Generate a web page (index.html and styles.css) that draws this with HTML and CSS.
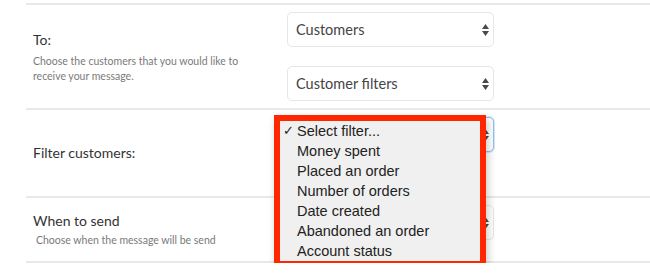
FILE: index.html
```html
<!DOCTYPE html>
<html lang="en">
<head>
    <meta charset="UTF-8">
    <meta name="viewport" content="width=device-width, initial-scale=1.0">
    <title>Message settings</title>
    <link rel="stylesheet" href="styles.css">
</head>
<body>
    <main class="settings">
        <section class="row row-to">
            <div class="label">
                <h3>To:</h3>
                <p>Choose the customers that you would like to<br>receive your message.</p>
            </div>
            <div class="controls">
                <div class="select">
                    <span>Customers</span>
                    <svg class="arrows" width="7" height="12" viewBox="0 0 7 12"><path d="M3.5 0 L7 5 H0 Z M0 7 H7 L3.5 12 Z" fill="#4a4a4a"/></svg>
                </div>
                <div class="select">
                    <span>Customer filters</span>
                    <svg class="arrows" width="7" height="12" viewBox="0 0 7 12"><path d="M3.5 0 L7 5 H0 Z M0 7 H7 L3.5 12 Z" fill="#4a4a4a"/></svg>
                </div>
            </div>
        </section>

        <section class="row row-filter">
            <div class="label">
                <h3>Filter customers:</h3>
            </div>
            <div class="controls">
                <!-- value hidden behind the open menu -->
                <div class="select focused">
                    <span></span>
                    <svg class="arrows" width="7" height="12" viewBox="0 0 7 12"><path d="M3.5 0 L7 5 H0 Z M0 7 H7 L3.5 12 Z" fill="#4a4a4a"/></svg>
                </div>
            </div>
        </section>

        <section class="row row-when">
            <div class="label">
                <h3>When to send</h3>
                <p class="indent">Choose when the message will be send</p>
            </div>
            <div class="controls">
                <div class="select">
                    <span></span>
                    <svg class="arrows" width="7" height="12" viewBox="0 0 7 12"><path d="M3.5 0 L7 5 H0 Z M0 7 H7 L3.5 12 Z" fill="#4a4a4a"/></svg>
                </div>
            </div>
        </section>

        <ul class="dropdown">
            <li class="checked">Select filter...</li>
            <li>Money spent</li>
            <li>Placed an order</li>
            <li>Number of orders</li>
            <li>Date created</li>
            <li>Abandoned an order</li>
            <li>Account status</li>
        </ul>
    </main>
</body>
</html>
```

FILE: styles.css
```css
body {
    margin: 0;
    padding: 0;
    background-color: #fff;
    font-family: 'Lato', 'Open Sans', sans-serif;
    color: #333;
}
.settings {
    position: relative;
    margin-left: 26px;
    padding-top: 3px;
}
.row {
    display: grid;
    grid-template-columns: 261px 207px;
    border-top: 2px solid #e9e9e9;
}
.row-when {
    border-bottom: 2px solid #e9e9e9;
}
.label {
    align-self: center;
    padding-left: 7px;
}
.label h3 {
    margin: 0;
    font-size: 14px;
    font-weight: 400;
    line-height: 20px;
    color: #333;
}
.label p {
    margin: 4px 0 0;
    font-size: 10.5px;
    line-height: 15px;
    color: #7a7a7a;
}
.label p.indent {
    margin-top: 2px;
    padding-left: 3px;
}
.controls {
    display: flex;
    flex-direction: column;
    gap: 19px;
    padding: 7px 0;
}
.row-filter .controls {
    padding-bottom: 44px;
}
.row-when .controls {
    padding-bottom: 21px;
}
.select {
    display: flex;
    align-items: center;
    justify-content: space-between;
    height: 35px;
    box-sizing: border-box;
    padding: 0 4px 0 8px;
    border: 1px solid #e6e6e6;
    border-radius: 5px;
    background-color: #fff;
    font-size: 14.5px;
    color: #444;
}
.select.focused {
    border-color: #8dbfee;
    box-shadow: 0 0 0 1px rgba(141, 191, 238, 0.35);
}
.dropdown {
    position: absolute;
    left: 248px;
    top: 115px;
    width: 200px;
    margin: 0;
    padding: 0;
    list-style: none;
    background-color: #f0f0f0;
    border: 6px solid #ff2600;
    box-shadow: 2px 4px 8px rgba(0, 0, 0, 0.22);
    font-family: 'Liberation Sans', Arial, sans-serif;
    font-size: 14.5px;
    line-height: 20px;
    color: #222;
}
.dropdown li {
    padding-left: 17px;
    position: relative;
}
.dropdown li.checked::before {
    content: '\2713';
    position: absolute;
    left: 3px;
    font-size: 13px;
}
```
